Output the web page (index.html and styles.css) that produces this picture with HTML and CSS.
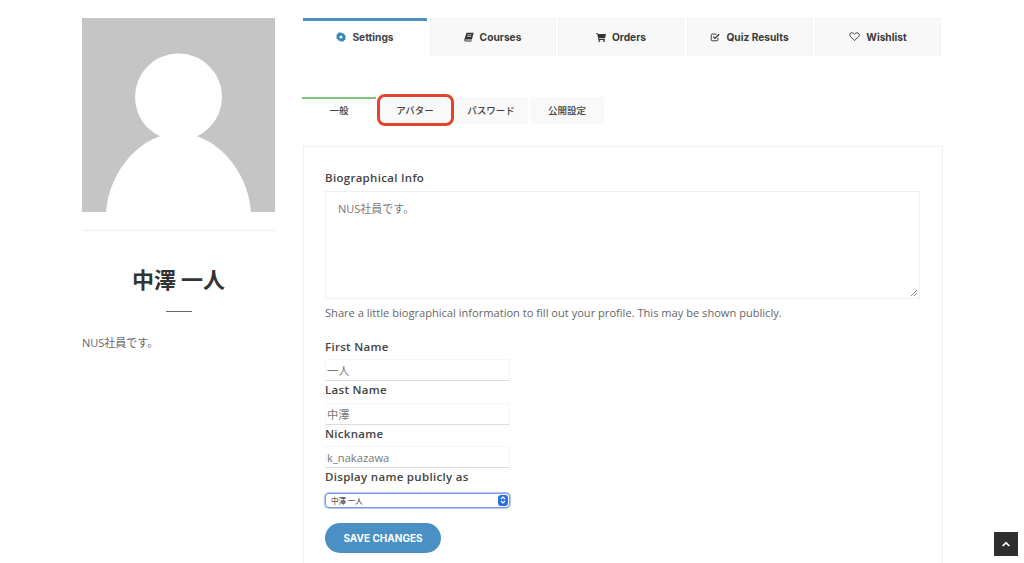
FILE: index.html
```html
<!DOCTYPE html>
<html lang="ja">
<head>
<meta charset="utf-8">
<title>Settings</title>
<link rel="stylesheet" href="styles.css">
</head>
<body>
<div class="page">
  <aside class="side">
    <svg class="avatar" viewBox="0 0 193 194" width="193" height="194" aria-hidden="true">
      <rect width="193" height="194" fill="#c5c5c5"/>
      <circle cx="96.500" cy="79" r="43.500" fill="#fff"/>
      <path d="M24 194C27 152 60 115 96.500 115C133 115 166 152 169 194Z" fill="#fff"/>
    </svg>
    <div class="side-rule"></div>
    <h1 class="name">中澤 一人</h1>
    <div class="name-rule"></div>
    <p class="bio">NUS社員です。</p>
  </aside>
  <main class="main">
    <nav class="tabs">
      <a class="tab tab-active">
        <svg class="ico ico-blue" viewBox="0 0 12 12"><path d="M6 .3l1.200 1.500 1.800-.6.500 1.800 1.900.5-.5 1.900L12 6l-1.100 1.500.5 1.900-1.900.5-.5 1.800-1.800-.6L6 11.700l-1.200-1.500-1.800.6-.5-1.800-1.900-.5.5-1.900L0 6l1.100-1.500-.5-1.900 1.900-.5.5-1.800 1.800.6z"/><circle cx="6" cy="6" r="1.800" fill="#fff"/></svg>
        Settings</a>
      <a class="tab">
        <svg class="ico" viewBox="0 0 12 12"><path d="M3 1h8.500L9.500 9H2.200c-.8 0-.8 1.300 0 1.300H9.500L9 11.500H2C.5 11.500.2 10 .6 8.500z"/><path d="M4.200 3.300h4.800M3.700 5.300h4.800" stroke="#f7f7f7" stroke-width=".8"/></svg>
        Courses</a>
      <a class="tab">
        <svg class="ico" viewBox="0 0 12 12"><path d="M0 1.500h2.300l.3 1H12L10.800 7.500H3.700l.2 1H10.500v1H3L1.500 2.500H0z"/><circle cx="4" cy="10.700" r="1.100"/><circle cx="9.500" cy="10.700" r="1.100"/></svg>
        Orders</a>
      <a class="tab">
        <svg class="ico" viewBox="0 0 12 12"><path d="M9.500 7v2.500a1 1 0 0 1-1 1h-6a1 1 0 0 1-1-1v-6a1 1 0 0 1 1-1H8" fill="none" stroke="#333" stroke-width="1.100"/><path d="M3.800 5.500L6 7.700 11 2.700" fill="none" stroke="#333" stroke-width="1.500"/></svg>
        Quiz Results</a>
      <a class="tab">
        <svg class="ico ico-wide" viewBox="0 0 12 12"><path d="M6 10.500L1.500 6C0 4.300 1 2 3.200 2 4.500 2 5.500 2.800 6 3.700 6.500 2.800 7.500 2 8.800 2 11 2 12 4.300 10.500 6z" fill="none" stroke="#333" stroke-width="1"/></svg>
        Wishlist</a>
    </nav>
    <nav class="subtabs">
      <a class="subtab subtab-active">一般</a>
      <a class="subtab subtab-marked">アバター<span class="marker"></span></a>
      <a class="subtab">パスワード</a>
      <a class="subtab">公開設定</a>
    </nav>
    <form class="card">
      <label class="label label-bio">Biographical Info</label>
      <div class="bio-box">NUS社員です。
        <svg class="grip" viewBox="0 0 8 8" width="8" height="8"><path d="M1 7L7 1M4 7L7 4" stroke="#888" stroke-width="1" fill="none"/></svg>
      </div>
      <p class="hint">Share a little biographical information to fill out your profile. This may be shown publicly.</p>
      <label class="label label-first">First Name</label>
      <div class="field">一人</div>
      <label class="label">Last Name</label>
      <div class="field">中澤</div>
      <label class="label">Nickname</label>
      <div class="field">k_nakazawa</div>
      <label class="label">Display name publicly as</label>
      <div class="select">中澤 一人
        <span class="select-arrows"><svg viewBox="0 0 8 10" width="8" height="10"><path d="M2 4l2-2 2 2M2 6l2 2 2-2" fill="none" stroke="#fff" stroke-width="1.200"/></svg></span>
      </div>
      <button class="save" type="button">SAVE CHANGES</button>
    </form>
  </main>
</div>
<a class="to-top"><svg viewBox="0 0 8 6" width="8" height="6"><path d="M4 .5L8 4.500 6.800 5.500 4 3 1.200 5.500 0 4.500z" fill="#fff"/></svg></a>
</body>
</html>
```
FILE: styles.css
```css
html, body {
  margin: 0;
  padding: 0;
  height: 563px;
  overflow: hidden;
  background: #fff;
}
body {
  font-family: "Open Sans", "Noto Sans CJK JP", sans-serif;
  color: #666;
}
.page {
  display: flex;
  align-items: flex-start;
  gap: 27px;
  padding: 18px 0 0 82px;
}
.side {
  width: 193px;
  flex: none;
}
.avatar {
  display: block;
}
.side-rule {
  height: 1px;
  margin-top: 18px;
  background: #eeeeee;
}
.name {
  margin: 32px 0 0;
  font-family: "Noto Sans CJK JP", sans-serif;
  font-size: 22px;
  line-height: 30px;
  font-weight: 700;
  color: #333;
  text-align: center;
}
.name-rule {
  width: 26px;
  height: 1px;
  margin: 18px auto 0;
  background: #666;
}
.bio {
  margin: 22px 0 0;
  font-size: 11px;
  line-height: 18px;
  color: #666;
}
.main {
  width: 641px;
  flex: none;
}
.tabs {
  display: flex;
  gap: 2.500px;
  width: 638px;
  margin-left: 1px;
}
.tab {
  flex: 1;
  height: 38px;
  box-sizing: border-box;
  padding: 0 0 2px;
  display: flex;
  align-items: center;
  justify-content: center;
  gap: 6px;
  background: #f8f8f8;
  border: 1px solid #f3f3f3;
  border-bottom: 0;
  font-family: Inter, "Liberation Sans", sans-serif;
  font-size: 10.200px;
  font-weight: 700;
  color: #3a3a3a;
}
.tab-active {
  background: #fff;
  border: 0;
  border-top: 3px solid #4a90c4;
  padding: 0 0 3px;
  color: #444;
}
.ico {
  width: 10px;
  height: 10px;
  fill: #333;
  flex: none;
}
.ico-blue {
  fill: #3585bb;
}
.ico-wide {
  width: 11px;
  height: 11px;
}
.subtabs {
  display: flex;
  gap: 2px;
  margin-top: 41px;
}
.subtab {
  position: relative;
  width: 74px;
  height: 27px;
  box-sizing: border-box;
  padding-bottom: 2px;
  display: flex;
  align-items: center;
  justify-content: center;
  background: #f9f9f9;
  font-family: "Noto Sans CJK JP", sans-serif;
  font-size: 9.500px;
  font-weight: 500;
  color: #444;
}
.subtab-active {
  background: #fff;
  border-top: 2px solid #7cc576;
  padding-bottom: 3px;
}
.marker {
  position: absolute;
  left: -1px;
  top: -3px;
  width: 71px;
  height: 26px;
  border: 3px solid #e2452b;
  border-radius: 8px;
}
.card {
  display: flex;
  flex-direction: column;
  align-items: flex-start;
  box-sizing: border-box;
  width: 640px;
  height: 430px;
  margin: 22px 0 0 1px;
  padding: 22px 21px 0;
  border: 1px solid #f0f0f0;
}
.label {
  font-size: 11.500px;
  line-height: 18.500px;
  font-weight: 600;
  letter-spacing: .3px;
  color: #444;
}
.label-first {
  margin-top: 15.500px;
}
.bio-box {
  position: relative;
  width: 595px;
  height: 108.500px;
  box-sizing: border-box;
  margin-top: 3px;
  padding: 8px 12px;
  border: 1px solid #f0f0f0;
  font-size: 11px;
  line-height: 18px;
  color: #777;
}
.grip {
  position: absolute;
  right: 1px;
  bottom: 1px;
}
.hint {
  margin: 5px 0 0;
  font-size: 11.100px;
  line-height: 18px;
  color: #666;
}
.field {
  width: 185px;
  height: 22px;
  box-sizing: border-box;
  margin-top: 3px;
  padding: 0 1px;
  border: 1px solid #f6f6f6;
  border-bottom: 1px solid #dcdcdc;
  font-size: 11.200px;
  line-height: 21px;
  color: #777;
}
.select {
  position: relative;
  width: 185px;
  height: 15px;
  box-sizing: border-box;
  margin-top: 6px;
  padding-left: 5px;
  background: #fff;
  border: 1px solid #7a9bec;
  border-radius: 4px;
  box-shadow: 0 0 0 1px #b5c8f5;
  font-family: "Noto Sans CJK JP", sans-serif;
  font-size: 7.500px;
  line-height: 13px;
  color: #333;
}
.select-arrows {
  position: absolute;
  right: 1px;
  top: 1px;
  width: 10px;
  height: 11px;
  display: flex;
  align-items: center;
  justify-content: center;
  border-radius: 3px;
  background: #2a70e0;
}
.save {
  width: 116px;
  height: 30px;
  margin-top: 15px;
  padding: 0;
  border: 0;
  border-radius: 15px;
  background: #4a90c4;
  font-family: Inter, "Liberation Sans", sans-serif;
  font-size: 10px;
  font-weight: 700;
  color: #fff;
}
.to-top {
  position: fixed;
  left: 994px;
  top: 532px;
  width: 24px;
  height: 24px;
  display: flex;
  align-items: center;
  justify-content: center;
  background: #2e2e2e;
}
```
